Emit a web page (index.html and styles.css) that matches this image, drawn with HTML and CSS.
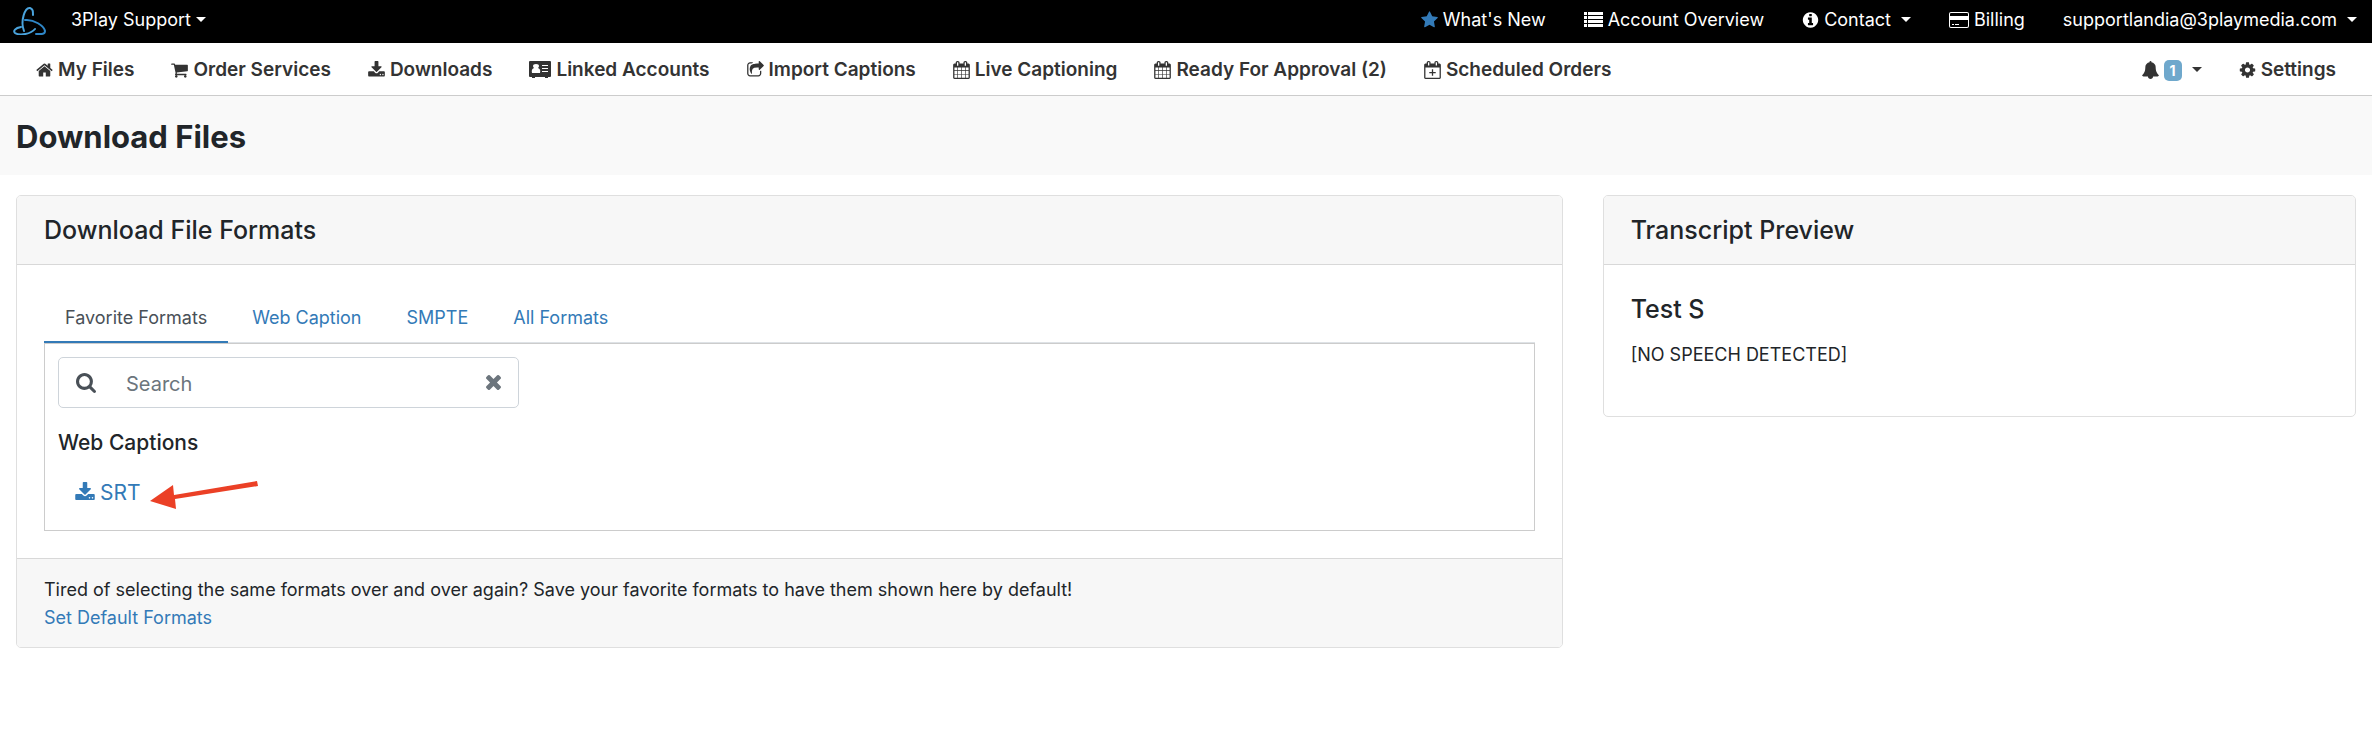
FILE: index.html
```html
<!DOCTYPE html>
<html lang="en">

<head>
    <meta charset="utf-8">
    <title>Download Files</title>
    <link rel="stylesheet" href="styles.css">
</head>

<body>
    <!-- shared icon shapes -->
    <svg class="icon-defs" aria-hidden="true">
        <symbol id="download" viewBox="64 0 1664 1792">
            <path d="M1344 1344q0-26-19-45t-45-19-45 19-19 45 19 45 45 19 45-19 19-45zm256 0q0-26-19-45t-45-19-45 19-19 45 19 45 45 19 45-19 19-45zm128-224v320q0 40-28 68t-68 28h-1472q-40 0-68-28t-28-68v-320q0-40 28-68t68-28h465l135 136q58 56 136 56t136-56l136-136h464q40 0 68 28t28 68zm-325-569q17 41-14 70l-448 448q-18 19-45 19t-45-19l-448-448q-31-29-14-70 17-39 59-39h256v-448q0-26 19-45t45-19h256q26 0 45 19t19 45v448h256q42 0 59 39z" />
        </symbol>
        <symbol id="calendar" viewBox="64 0 1664 1792">
            <path d="M192 1664h288v-288h-288v288zm352 0h320v-288h-320v288zm-352-352h288v-320h-288v320zm352 0h320v-320h-320v320zm-352-384h288v-288h-288v288zm736 736h320v-288h-320v288zm-384-736h320v-288h-320v288zm768 736h288v-288h-288v288zm-384-352h320v-320h-320v320zm-352-864v-288q0-13-9.5-22.5t-22.5-9.5h-64q-13 0-22.5 9.5t-9.5 22.5v288q0 13 9.5 22.5t22.5 9.5h64q13 0 22.5-9.5t9.5-22.5zm736 864h288v-320h-288v320zm-384-384h320v-288h-320v288zm384 0h288v-288h-288v288zm32-480v-288q0-13-9.5-22.5t-22.5-9.5h-64q-13 0-22.5 9.5t-9.5 22.5v288q0 13 9.5 22.5t22.5 9.5h64q13 0 22.5-9.5t9.5-22.5zm384-64v1280q0 52-38 90t-90 38h-1408q-52 0-90-38t-38-90v-1280q0-52 38-90t90-38h128v-96q0-66 47-113t113-47h64q66 0 113 47t47 113v96h384v-96q0-66 47-113t113-47h64q66 0 113 47t47 113v96h128q52 0 90 38t38 90z" />
        </symbol>
    </svg>

    <header>
        <nav class="topbar">
            <a class="logo" href="#" aria-label="3Play Media">
                <svg width="36" height="30" viewBox="0 0 36 30">
                    <g fill="none" stroke="#4aa3dc" stroke-linecap="round">
                        <path stroke-width="2" d="M13 26C9 16 14 2 19 3c3 1 3 3 3 7" />
                        <path stroke-width="2" d="M14 15c9-1 19 6 20 11 0 4-5 3-9 3" stroke="#2f87c8" />
                        <path stroke-width="2" d="M10 22c-6 1-8 4-6 6 5 3 16 1 20-4" />
                    </g>
                </svg>
            </a>
            <a href="#">3Play Support<span class="caret caret-near"></span></a>
            <a class="push" href="#"><svg class="icon star" viewBox="64 0 1664 1792"><path d="M1728 647q0 22-26 48l-363 354 86 500q1 7 1 20 0 21-10.5 35.5t-30.5 14.5q-19 0-40-12l-449-236-449 236q-22 12-40 12-21 0-31.5-14.5t-10.5-35.5q0-6 2-20l86-500-364-354q-25-27-25-48 0-37 56-46l502-73 225-455q19-41 49-41t49 41l225 455 502 73q56 9 56 46z" /></svg>What's New</a>
            <a href="#"><svg class="icon icon-list" viewBox="0 0 19 18"><path d="M0 1h3v3H0zM4 1h15v3H4zM0 5h3v3H0zM4 5h15v3H4zM0 9h3v3H0zM4 9h15v3H4zM0 13h3v3H0zM4 13h15v3H4z" /></svg>Account Overview</a>
            <a href="#"><svg class="icon" viewBox="64 0 1664 1792"><path d="M1152 1376v-160q0-14-9-23t-23-9h-96v-512q0-14-9-23t-23-9h-320q-14 0-23 9t-9 23v160q0 14 9 23t23 9h96v320h-96q-14 0-23 9t-9 23v160q0 14 9 23t23 9h448q14 0 23-9t9-23zm-128-896v-160q0-14-9-23t-23-9h-192q-14 0-23 9t-9 23v160q0 14 9 23t23 9h192q14 0 23-9t9-23zm640 416q0 209-103 385.5t-279.5 279.5-385.5 103-385.5-103-279.5-279.5-103-385.5 103-385.5 279.5-279.5 385.5-103 385.5 103 279.5 279.5 103 385.5z" /></svg>Contact<span class="caret"></span></a>
            <a href="#"><svg class="icon icon-wide" viewBox="0 0 20 18"><path fill-rule="evenodd" d="M2 1h16q2 0 2 2v12q0 2-2 2H2q-2 0-2-2V3q0-2 2-2zM2 2q-1 0-1 1v2h18V3q0-1-1-1zM1 9v6q0 1 1 1h16q1 0 1-1V9zM3 13h2v1H3zM6 13h4v1H6z" /></svg>Billing</a>
            <a href="#">supportlandia@3playmedia.com<span class="caret"></span></a>
        </nav>

        <nav class="mainbar">
            <a href="#"><svg class="icon" viewBox="64 0 1664 1792"><path d="M1472 992v480q0 26-19 45t-45 19h-384v-384h-256v384h-384q-26 0-45-19t-19-45v-480q0-1 .5-3t.5-3l575-474 575 474q1 2 1 6zm223-69l-62 74q-8 9-21 11h-3q-13 0-21-7l-692-577-692 577q-12 8-24 7-13-2-21-11l-62-74q-8-10-7-23.5t11-21.5l719-599q32-26 76-26t76 26l244 204v-195q0-14 9-23t23-9h192q14 0 23 9t9 23v408l219 182q10 8 11 21.5t-7 23.5z" /></svg>My Files</a>
            <a href="#"><svg class="icon" viewBox="64 0 1664 1792"><path d="M704 1536q0 52-38 90t-90 38-90-38-38-90 38-90 90-38 90 38 38 90zm896 0q0 52-38 90t-90 38-90-38-38-90 38-90 90-38 90 38 38 90zm128-1088v512q0 24-16.5 42.5t-40.5 21.5l-1044 122q13 60 13 70 0 16-24 64h920q26 0 45 19t19 45-19 45-45 19h-1024q-26 0-45-19t-19-45q0-11 8-31.5t16-36 21.5-40 15.5-29.5l-177-823h-204q-26 0-45-19t-19-45 19-45 45-19h256q16 0 28.5 6.5t19.5 15.5 13 24.5 8 26 5.5 29.5 4.5 26h1201q26 0 45 19t19 45z" /></svg>Order Services</a>
            <a href="#"><svg class="icon"><use href="#download" /></svg>Downloads</a>
            <a href="#"><svg class="icon icon-card" viewBox="0 0 22 18"><path fill-rule="evenodd" d="M1 0h20q1 0 1 1v14q0 1-1 1h-2v1h-3v-1H6v1H3v-1H1q-1 0-1-1V1q0-1 1-1zM3 12h8q1-4-2-5 1-1 1-2 0-2-3-2T4 5q0 1 1 2-3 1-2 5zM13 4h6v1h-6zM13 7h6v1h-6zM13 10h6v1h-6z" /></svg>Linked Accounts</a>
            <a href="#"><svg class="icon" viewBox="64 0 1664 1792"><path d="M1472 989v259q0 119-84.5 203.5t-203.5 84.5h-832q-119 0-203.5-84.5t-84.5-203.5v-832q0-119 84.5-203.5t203.5-84.5h255q13 0 22.5 9.5t9.5 22.5q0 27-26 32-77 26-133 60-10 4-16 4h-112q-66 0-113 47t-47 113v832q0 66 47 113t113 47h832q66 0 113-47t47-113v-214q0-19 18-29 28-13 54-37 16-16 35-8 21 9 21 29zm237-496l-384 384q-18 19-45 19-12 0-25-5-39-17-39-59v-192h-160q-323 0-438 131-119 137-74 473 3 23-20 34-8 2-12 2-16 0-26-13-10-14-21-31t-39.5-68.5-49.5-99.5-38.5-114-17.5-122q0-49 3.5-91t14-90 28-88 47-81.5 68.5-74 94.5-61.5 124.5-48.5 159.5-30.5 196.5-11h160v-192q0-42 39-59 13-5 25-5 26 0 45 19l384 384q19 19 19 45t-19 45z" /></svg>Import Captions</a>
            <a href="#"><svg class="icon"><use href="#calendar" /></svg>Live Captioning</a>
            <a href="#"><svg class="icon"><use href="#calendar" /></svg>Ready For Approval (2)</a>
            <a href="#"><svg class="icon" viewBox="64 0 1664 1792"><path fill-rule="evenodd" d="M1728 384v1280q0 52-38 90t-90 38h-1408q-52 0-90-38t-38-90v-1280q0-52 38-90t90-38h128v-96q0-66 47-113t113-47h64q66 0 113 47t47 113v96h384v-96q0-66 47-113t113-47h64q66 0 113 47t47 113v96h128q52 0 90 38t38 90zM192 640v1024h1408V640zM448 128v320h128V128zM1216 128v320h128V128zM832 832h128v256h256v128H960v256H832v-256H576v-128h256z" /></svg>Scheduled Orders</a>
            <a class="push" href="#" aria-label="Notifications"><svg class="icon" viewBox="64 0 1664 1792"><path d="M1728 1408q0 52-38 90t-90 38h-448q0 106-75 181t-181 75-181-75-75-181h-448q-52 0-90-38t-38-90q50-42 91-88t85-119.5 74.5-158.5 50-206 19.5-260q0-152 117-282.5t307-158.5q-8-19-8-39 0-40 28-68t68-28 68 28 28 68q0 20-8 39 190 28 307 158.5t117 282.5q0 139 19.5 260t50 206 74.5 158.5 85 119.5 91 88z" /></svg><span class="badge">1</span><span class="caret"></span></a>
            <a href="#"><svg class="icon" viewBox="64 0 1664 1792"><path d="M1152 896q0-106-75-181t-181-75-181 75-75 181 75 181 181 75 181-75 75-181zm512-109v222q0 12-8 23t-20 13l-185 28q-19 54-39 91 35 50 107 138 10 12 10 25t-9 23q-27 37-99 108t-94 71q-12 0-26-9l-138-108q-44 23-91 38-16 136-29 186-7 28-36 28h-222q-14 0-24.5-8.5t-11.5-21.5l-28-184q-49-16-90-37l-141 107q-10 9-25 9-14 0-25-11-126-114-165-168-7-10-7-23 0-12 8-23 15-21 51-66.5t54-70.5q-27-50-41-99l-183-27q-13-2-21-12.5t-8-23.5v-222q0-12 8-23t19-13l186-28q14-46 39-92-40-57-107-138-10-12-10-24 0-10 9-23 26-36 98.5-107.5t94.5-71.5q13 0 26 10l138 107q44-23 91-38 16-136 29-186 7-28 36-28h222q14 0 24.5 8.5t11.5 21.5l28 184q49 16 90 37l142-107q9-9 24-9 13 0 25 10 129 119 165 170 7 8 7 22 0 12-8 23-15 21-51 66.5t-54 70.5q26 50 41 98l183 28q13 2 21 12.5t8 23.5z" /></svg>Settings</a>
        </nav>
    </header>

    <div class="page-title">
        <h1>Download Files</h1>
    </div>

    <main class="content">
        <section class="card formats">
            <h2 class="card-header">Download File Formats</h2>
            <div class="card-body">
                <ul class="tabs">
                    <li><a class="active" href="#">Favorite Formats</a></li>
                    <li><a href="#">Web Caption</a></li>
                    <li><a href="#">SMPTE</a></li>
                    <li><a href="#">All Formats</a></li>
                </ul>
                <div class="tab-content">
                    <div class="search">
                        <label for="format-search" aria-label="Search">
                            <svg width="20" height="20" viewBox="64 128 1664 1664"><path d="M1216 832q0-185-131.5-316.5t-316.5-131.5-316.5 131.5-131.5 316.5 131.5 316.5 316.5 131.5 316.5-131.5 131.5-316.5zm512 832q0 52-38 90t-90 38q-54 0-90-38l-343-342q-179 124-399 124-143 0-273.5-55.5t-225-150-150-225-55.5-273.5 55.5-273.5 150-225 225-150 273.5-55.5 273.5 55.5 225 150 150 225 55.5 273.5q0 220-124 399l343 343q37 37 37 90z" /></svg>
                        </label>
                        <input id="format-search" type="text" placeholder="Search">
                        <button type="button" aria-label="Clear search">
                            <svg width="15" height="15" viewBox="302 366 1188 1188"><path d="M1490 1322q0 40-28 68l-136 136q-28 28-68 28t-68-28l-294-294-294 294q-28 28-68 28t-68-28l-136-136q-28-28-28-68t28-68l294-294-294-294q-28-28-28-68t28-68l136-136q28-28 68-28t68 28l294 294 294-294q28-28 68-28t68 28l136 136q28 28 28 68t-28 68l-294 294 294 294q28 28 28 68z" /></svg>
                        </button>
                    </div>
                    <h3>Web Captions</h3>
                    <div class="format">
                        <a href="#"><svg class="icon"><use href="#download" /></svg>SRT</a>
                        <svg class="arrow" width="108" height="30" viewBox="0 0 108 30"><path fill="#eb4026" d="M0 20L23 4l1 10L107 0l1 5L25 18l1 10z" /></svg>
                    </div>
                </div>
            </div>
            <div class="card-footer">
                Tired of selecting the same formats over and over again? Save your favorite formats to have them shown here by default!<br>
                <a href="#">Set Default Formats</a>
            </div>
        </section>

        <section class="card">
            <h2 class="card-header">Transcript Preview</h2>
            <div class="card-body transcript">
                <h2>Test S</h2>
                <p>[NO SPEECH DETECTED]</p>
            </div>
        </section>
    </main>
</body>

</html>
```

FILE: styles.css
```css
* {
    box-sizing: border-box;
}

body {
    margin: 0;
    font-family: Inter, "Liberation Sans", sans-serif;
    font-size: 18px;
    line-height: 28px;
    color: #212529;
    background: #fff;
}

h1,
h2,
h3,
p,
ul {
    margin: 0;
    padding: 0;
}

h2 {
    font-size: 25px;
    font-weight: 500;
    line-height: 32px;
}

a {
    color: #337ab7;
    text-decoration: none;
}

/* icons */
.icon-defs {
    display: none;
}

.icon {
    width: 17px;
    height: 18px;
    margin-right: 5px;
    vertical-align: -3px;
    fill: currentColor;
}

.icon-list {
    width: 19px;
}

.icon-wide {
    width: 20px;
}

.icon-card {
    width: 22px;
}

.star {
    color: #337ab7;
}

.caret {
    display: inline-block;
    margin-left: 10px;
    vertical-align: 4px;
    border-top: 5px solid;
    border-left: 5px solid transparent;
    border-right: 5px solid transparent;
}

.caret-near {
    margin-left: 5px;
}

/* navigation */
.topbar,
.mainbar {
    display: flex;
    align-items: center;
    white-space: nowrap;
}

.topbar {
    gap: 38px;
    height: 43px;
    padding: 0 15px 4px 11px;
    background: #000;
}

.topbar a {
    color: #fff;
}

.topbar .logo {
    display: flex;
    margin-right: -14px;
}

.mainbar {
    gap: 37px;
    height: 53px;
    padding: 2px 36px 0;
    border-bottom: 1px solid #ccc;
    font-size: 19px;
    font-weight: 600;
}

.mainbar a {
    color: #333;
}

.topbar .push,
.mainbar .push {
    margin-left: auto;
}

.badge {
    display: inline-block;
    padding: 0 6px;
    border-radius: 5px;
    background: #6fa8cc;
    color: #fff;
    font-size: 14px;
    font-weight: 700;
    line-height: 21px;
}

.page-title {
    padding: 21px 16px 19px;
    background: #f9f9f9;
}

.page-title h1 {
    font-size: 31px;
    font-weight: 700;
    line-height: 39px;
}

/* cards */
.content {
    display: grid;
    grid-template-columns: repeat(3, 1fr);
    align-items: start;
    gap: 40px;
    padding: 20px 16px;
}

.formats {
    grid-column: span 2;
}

.card {
    border: 1px solid #dfdfdf;
    border-radius: 5px;
    overflow: hidden;
}

.card-header {
    padding: 18px 27px;
    border-bottom: 1px solid #d8d8d8;
    background: #f7f7f7;
}

.card-body {
    padding: 27px;
}

.card-footer {
    padding: 17px 27px 15px;
    border-top: 1px solid #d8d8d8;
    background: #f7f7f7;
}

.tabs {
    display: flex;
    gap: 3px;
    border-bottom: 1px solid #dee2e6;
    list-style: none;
}

.tabs a {
    display: block;
    margin-bottom: -1px;
    padding: 12px 21px 9px;
    border-bottom: 2px solid transparent;
}

.tabs .active {
    border-color: #337ab7;
    color: #495057;
}

.tab-content {
    padding: 13px;
    border: 1px solid #ccc;
}

.search {
    display: flex;
    align-items: center;
    width: 31%;
    min-width: 461px;
    height: 51px;
    padding: 0 17px;
    border: 1px solid #ced4da;
    border-radius: 5px;
}

.search svg {
    display: block;
    fill: currentColor;
}

.search label {
    color: #495057;
}

.search input {
    flex: 1;
    min-width: 0;
    padding: 2px 30px 0;
    border: 0;
    outline: 0;
    background: none;
    font: inherit;
    font-size: 20px;
}

.search input::placeholder {
    color: #6c757d;
    opacity: 1;
}

.search button {
    padding: 0;
    border: 0;
    background: none;
    color: #6c757d;
}

.tab-content h3 {
    margin: 20px 0;
    font-size: 21px;
    font-weight: 500;
    line-height: 30px;
}

.format {
    position: relative;
    padding: 1px 17px 10px;
    font-size: 21px;
}

.format .icon {
    width: 20px;
    height: 21px;
}

/* pointer drawn over the panel next to the SRT link */
.arrow {
    position: absolute;
    left: 92px;
    top: 3px;
}

.transcript {
    padding-top: 28px;
}

.transcript h2 {
    margin-bottom: 16px;
}

.transcript p {
    margin-bottom: 20px;
}
```
